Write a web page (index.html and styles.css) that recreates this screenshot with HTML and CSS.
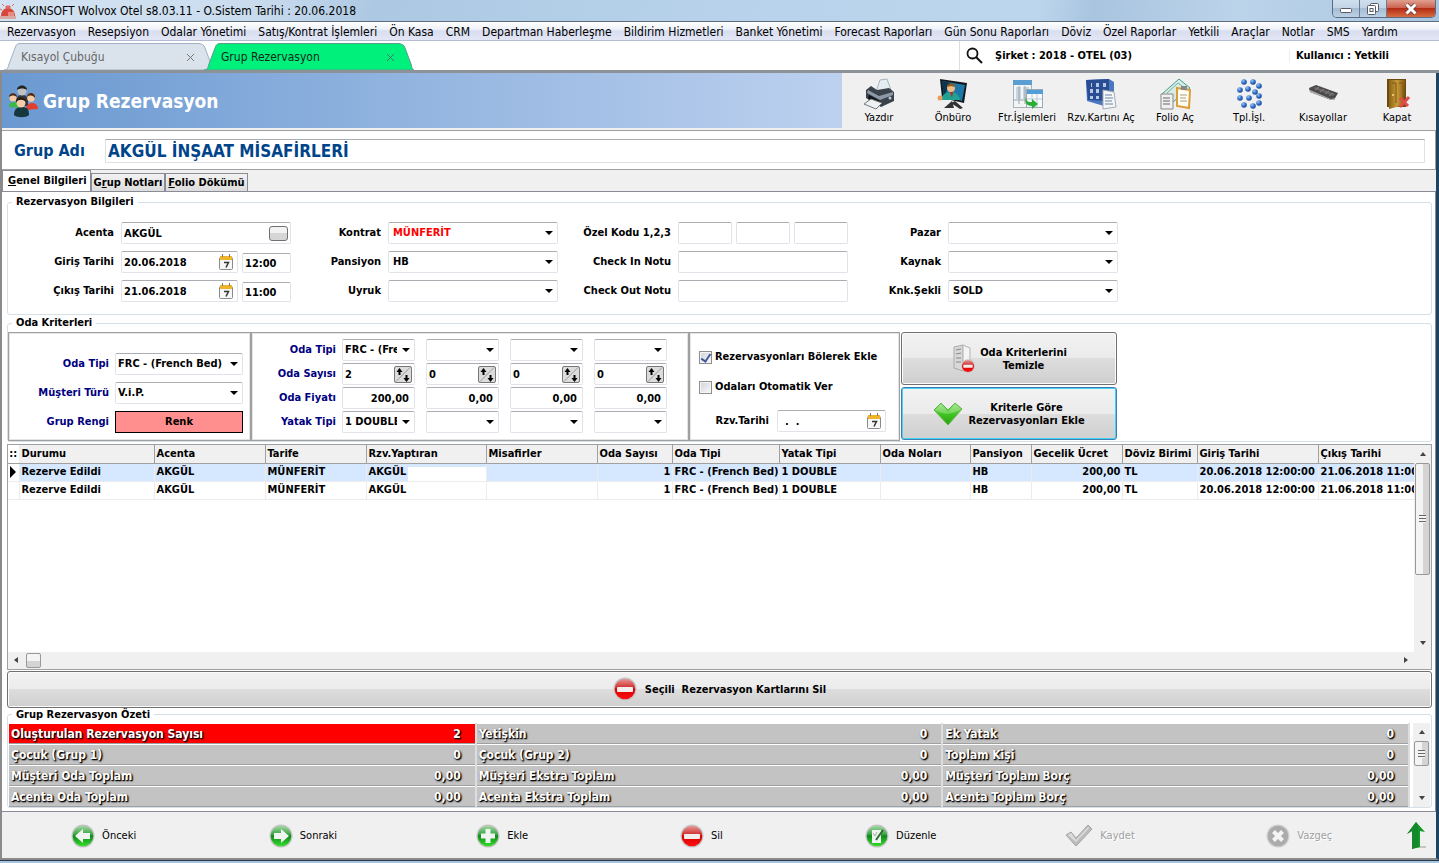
FILE: index.html
```
<!DOCTYPE html>
<html lang="tr">

<head>
    <meta charset="UTF-8">
    <meta name="viewport" content="width=device-width, initial-scale=1.0">
    <title>AKINSOFT Wolvox Otel</title>
    <link rel="stylesheet" href="styles.css">
</head>

<body>
    <!-- shared icons -->
    <svg class="defs" aria-hidden="true">
        <defs>
            <linearGradient id="gGreen" x1="0" y1="0" x2="0" y2="1">
                <stop offset="0" stop-color="#a4d8a4" />
                <stop offset="0.4" stop-color="#3fa84a" />
                <stop offset="0.5" stop-color="#0f8a1c" />
                <stop offset="1" stop-color="#35e02a" />
            </linearGradient>
            <linearGradient id="gRed" x1="0" y1="0" x2="0" y2="1">
                <stop offset="0" stop-color="#e89a9a" />
                <stop offset="0.45" stop-color="#d02a2a" />
                <stop offset="0.5" stop-color="#d80000" />
                <stop offset="1" stop-color="#ff1010" />
            </linearGradient>
            <linearGradient id="gDoor" x1="0" y1="0" x2="1" y2="0">
                <stop offset="0" stop-color="#8a6414" />
                <stop offset="0.5" stop-color="#c79a3a" />
                <stop offset="1" stop-color="#8a5a10" />
            </linearGradient>
            <linearGradient id="gCheck" x1="0" y1="0" x2="0" y2="1">
                <stop offset="0" stop-color="#8fe070" />
                <stop offset="0.5" stop-color="#3fc422" />
                <stop offset="1" stop-color="#2aa012" />
            </linearGradient>
            <radialGradient id="gDot" cx="0.35" cy="0.3" r="0.7">
                <stop offset="0" stop-color="#9cc4f4" />
                <stop offset="0.6" stop-color="#2f6cc8" />
                <stop offset="1" stop-color="#1c4a98" />
            </radialGradient>
            <symbol id="minus" viewBox="0 0 24 24">
                <circle cx="12" cy="12" r="11.5" fill="#c4c4c4" />
                <circle cx="12" cy="12" r="10.3" fill="url(#gRed)" />
                <rect x="4" y="10" width="16" height="5" rx="1" fill="#f2eeee" />
            </symbol>
            <symbol id="calendar" viewBox="0 0 14 16">
                <rect x="0.5" y="3.5" width="13" height="12" rx="1" fill="#f6f6f6" stroke="#8a8a8a" />
                <rect x="1" y="2" width="12" height="4" fill="#f0b428" />
                <path d="M3.5 0v3M10.500 0v3" stroke="#777" />
                <path d="M5 8.500h4.500L7 13.500" fill="none" stroke="#333" stroke-width="1.5" />
            </symbol>
            <symbol id="updown" viewBox="0 0 18 17">
                <rect x="0.5" y="0.5" width="17" height="16" rx="1.500" fill="#dcdcdc" stroke="#777" />
                <path d="M2 15.500L16 1.500" stroke="#999" />
                <path d="M5.500 9V5M12.500 9v4" stroke="#000" stroke-width="2" />
                <path d="M2.500 6L5.500 2l3 4zM9.500 12l3 4 3-4z" />
            </symbol>
        </defs>
    </svg>

    <header class="titlebar">
        <svg class="app-icon" width="16" height="16" viewBox="0 0 16 16">
            <path d="M1 13c0-5 3-8 7-8s7 3 7 8z" fill="#d8463c" />
            <path d="M6 3h4v2H6zM2 1l2 2M14 1l-2 2M0 6l2 1" fill="#e06a60" stroke="#e06a60" />
            <rect y="13" width="16" height="3" fill="#d8a8a4" />
            <path d="M9 9v4M11 9v4M13 9v4" stroke="#f4d0cc" />
        </svg>
        <span class="title">AKINSOFT Wolvox Otel s8.03.11 - O.Sistem Tarihi : 20.06.2018</span>
        <div class="window-buttons">
            <button class="win" aria-label="Simge durumuna küçült">
                <svg width="12" height="10" viewBox="0 0 12 10"><rect x="0.5" y="4.500" width="11" height="4" rx="1" fill="#fff" stroke="#555a66" /></svg>
            </button>
            <button class="win" aria-label="Önceki boyut">
                <svg width="12" height="12" viewBox="0 0 12 12" fill="#fff" stroke="#555a66"><rect x="3.500" y="0.500" width="8" height="8" rx="1" /><rect x="0.500" y="2.500" width="8" height="9" rx="1" /><rect x="3" y="5.500" width="3" height="3" /></svg>
            </button>
            <button class="win close" aria-label="Kapat">
                <svg width="14" height="12" viewBox="0 0 14 12"><path d="M2.500 1.500l9 9M11.500 1.500l-9 9" stroke="#6a3a3a" stroke-width="4.500" /><path d="M2.500 1.500l9 9M11.500 1.500l-9 9" stroke="#fff" stroke-width="3" /></svg>
            </button>
        </div>
    </header>

    <nav class="menu">
        <a href="#">Rezervasyon</a>
        <a href="#">Resepsiyon</a>
        <a href="#">Odalar Yönetimi</a>
        <a href="#">Satış/Kontrat İşlemleri</a>
        <a href="#">Ön Kasa</a>
        <a href="#">CRM</a>
        <a href="#">Departman Haberleşme</a>
        <a href="#">Bildirim Hizmetleri</a>
        <a href="#">Banket Yönetimi</a>
        <a href="#">Forecast Raporları</a>
        <a href="#">Gün Sonu Raporları</a>
        <a href="#">Döviz</a>
        <a href="#">Özel Raporlar</a>
        <a href="#">Yetkili</a>
        <a href="#">Araçlar</a>
        <a href="#">Notlar</a>
        <a href="#">SMS</a>
        <a href="#">Yardım</a>
    </nav>

    <div class="doc-tabs">
        <div class="doc-tab">
            <svg class="tab-shape" viewBox="0 0 210 27" preserveAspectRatio="none"><path d="M0 27c4 0 4-3 5-6l6-16c1-3 2-4.500 5-4.500h178c4 0 6 1.500 7 4.500l6 16c1 3 1 6 3 6z" fill="#dae3ec" stroke="#9fb0c2" /></svg>
            <span>Kısayol Çubuğu</span>
            <button class="tab-close" aria-label="Sekmeyi kapat"><svg width="7" height="7" viewBox="0 0 7 7"><path d="M0 0l7 7M7 0L0 7" stroke="#777" /></svg></button>
        </div>
        <div class="doc-tab active">
            <svg class="tab-shape" viewBox="0 0 210 27" preserveAspectRatio="none"><path d="M0 27c4 0 4-3 5-6l6-16c1-3 2-4.500 5-4.500h178c4 0 6 1.500 7 4.500l6 16c1 3 1 6 3 6z" fill="#00f07c" stroke="#5d9a8e" /></svg>
            <span>Grup Rezervasyon</span>
            <button class="tab-close" aria-label="Sekmeyi kapat"><svg width="7" height="7" viewBox="0 0 7 7"><path d="M0 0l7 7M7 0L0 7" stroke="#3f7a60" /></svg></button>
        </div>
        <div class="session">
            <svg width="17" height="17" viewBox="0 0 17 17" fill="none" stroke="#111"><circle cx="6.500" cy="6.500" r="5" stroke-width="1.800" /><path d="M10 10l6 6" stroke-width="2" /></svg>
            <b class="company">Şirket : 2018 - OTEL (03)</b>
            <b class="user">Kullanıcı : Yetkili</b>
        </div>
    </div>

    <main class="window">
        <div class="banner">
            <svg width="30" height="34" viewBox="0 0 30 34">
                <path d="M7 17c0-5 3-6 6-6s6 1 6 6v5H7z" fill="#33363c" />
                <circle cx="13" cy="7" r="4.500" fill="#c0c0c0" /><path d="M8 6c0-6 10-6 10 0-3-2-7-2-10 0z" fill="#222" />
                <path d="M0 23c0-4 2-5 5-5s6 2 6 6z" fill="#3eb84a" /><circle cx="4" cy="14" r="3.500" fill="#f4c8a0" /><path d="M0 13c0-5 8-5 8 0-3-2-5-2-8 0z" fill="#4a2a14" />
                <path d="M17 26c0-5 3-7 6-7s6 2 6 6z" fill="#e0402c" /><circle cx="22" cy="14" r="3.800" fill="#f6cba4" /><path d="M18 13c0-6 9-5 8 1-3-3-5-3-8-1z" fill="#5a2a14" />
                <path d="M5 31c0-6 3-8 8-8s7 2 7 8c-3 3-12 3-15 0z" fill="#14383e" /><circle cx="12" cy="19" r="4.500" fill="#f6cda8" /><path d="M7 18c0-6 10-6 10 0-3-3-7-3-10 0z" fill="#2a1a10" />
            </svg>
            <h1>Grup Rezervasyon</h1>
            <div class="toolbar">
                <button>
                    <svg width="32" height="32" viewBox="0 0 32 32"><path d="M13 14L17 2l7-1 4 11z" fill="#e4edf2" stroke="#a8b4bc" /><path d="M3 12l5-4 6 4 12-2 5 4v9l-13 6-15-9z" fill="#3a424c" /><path d="M5 12l11 6 14-4v3l-13 5L4 15z" fill="#8d99a6" /><path d="M6 17l11 6-1 4-11-6z" fill="#0e1218" /><path d="M1 26l7-5 11 4-6 6z" fill="#eef2f4" stroke="#777" /><circle cx="27" cy="20" r="1.500" fill="#bcd" /></svg>
                    Yazdır
                </button>
                <button>
                    <svg width="32" height="32" viewBox="0 0 32 32"><path d="M3 1l27 4-3 20L5 20z" fill="#15181c" /><path d="M5 3l23 4-3 16L7 18z" fill="#1d78a8" /><path d="M5 3l9 2-7 13z" fill="#0b3550" /><circle cx="14" cy="10" r="4" fill="#f0bc88" /><path d="M10 9c0-5 8-5 8 0l-4-1z" fill="#8a5a22" /><path d="M3 22c3-6 6-8 11-8s8 3 9 8z" fill="#1fa392" /><path d="M13 14h3l-1 6z" fill="#c22" /><circle cx="3" cy="20" r="2.500" fill="#ee9a5a" /><path d="M7 30l8-7 2 7M18 23l8 7-3 1-9-6" fill="#333" /></svg>
                    Önbüro
                </button>
                <button>
                    <svg width="32" height="32" viewBox="0 0 32 32"><rect x="2.500" y="2.500" width="18" height="27" fill="#f2f4f6" stroke="#aab2ba" /><path d="M2 2h19v5H2z" fill="#5d9ed2" /><path d="M5 9h5v12H5zM12 9h6v12h-6z" fill="#c8d4e0" /><path d="M2 22h19M8 8v18M14 8v18" stroke="#9aa4ae" /><rect x="15.500" y="11.500" width="16" height="18" fill="#f6fafc" stroke="#98a8b4" /><path d="M16 12h16v4H16z" fill="#4f9ed8" /><path d="M21 16v13M26 16v13M16 21h15" stroke="#bccad4" /><path d="M15 19c0 5 3 5 6 5v-3l6 5-6 5v-3c-5 0-8-3-6-9z" fill="#2cae36" /></svg>
                    Ftr.İşlemleri
                </button>
                <button>
                    <svg width="32" height="32" viewBox="0 0 32 32"><path d="M1 2l23-1 5 3v20l-10 4L2 23z" fill="#4a78c0" /><path d="M1 2l23-1v22L3 22z" fill="#2a4c92" /><g fill="#b4c8ea"><rect x="6" y="5" width="1" height="4" /><rect x="11" y="5" width="3" height="4" /><rect x="18" y="5" width="3" height="4" /><rect x="5" y="11" width="3" height="4" /><rect x="11" y="11" width="3" height="4" /><rect x="5" y="18" width="3" height="3" /><rect x="11" y="18" width="3" height="3" /></g><path d="M18 12l11 2 2 15-13 2z" fill="#f4f6f8" stroke="#a4acb4" /><path d="M20 17h7M20 20h8M20 23h7M20 26h8" stroke="#6c84a4" /></svg>
                    Rzv.Kartını Aç
                </button>
                <button>
                    <svg width="32" height="32" viewBox="0 0 32 32"><path d="M3 16L20 1l11 9-17 14z" fill="#d6ece4" stroke="#4a9a88" /><path d="M8 15L19 5l8 6" fill="none" stroke="#70b4a4" /><path d="M2 16h12v15H2z" fill="#f0f0f0" stroke="#888" /><path d="M4 20h7M4 23h7M4 26h7" stroke="#666" /><path d="M18 10l13 2-1 18-12-2z" fill="#fffdf4" stroke="#dd9c38" stroke-width="2" /><path d="M21 17h7M21 20h6M21 23h7" stroke="#a89c84" /><rect x="22" y="8" width="6" height="4" fill="#888" /></svg>
                    Folio Aç
                </button>
                <button>
                    <svg width="32" height="32" viewBox="0 0 32 32" fill="url(#gDot)"><circle cx="11" cy="4" r="2.800" /><circle cx="20" cy="4" r="2.800" /><circle cx="7" cy="12" r="2.800" /><circle cx="15" cy="11" r="2.800" /><circle cx="26" cy="8" r="2.800" /><circle cx="7" cy="20" r="2.800" /><circle cx="16" cy="20" r="2.800" /><circle cx="22" cy="14" r="2.800" /><circle cx="11" cy="27" r="2.800" /><circle cx="20" cy="28" r="2.800" /><circle cx="26" cy="25" r="2.800" /><circle cx="26" cy="18" r="2.800" /></svg>
                    Tpl.İşl.
                </button>
                <button>
                    <svg width="32" height="32" viewBox="0 0 32 32"><path d="M2 10l7-3 22 8-4 7h-3L3 14z" fill="#4a4a4c" /><path d="M6 10l3-1 19 7-2 2z" fill="#6c6664" /><path d="M3 14l21 8h3l1-2-4 1L3 12z" fill="#aeaeae" /><path d="M8 12l4-3M13 14l4-3M18 16l4-3M22 18l4-3" stroke="#8a8480" /></svg>
                    Kısayollar
                </button>
                <button>
                    <svg width="32" height="32" viewBox="0 0 32 32"><path d="M6 1h19v28H6z" fill="#6a4a10" /><path d="M8 2h16l-1 25-15 4z" fill="url(#gDoor)" /><path d="M11 5h4v20M18 5h4v18" fill="none" stroke="#7a5818" /><circle cx="12" cy="17" r="1" fill="#f8e070" /><path d="M19 20l8 8M28 19l-9 10" stroke="#e04a4a" stroke-width="3" /></svg>
                    Kapat
                </button>
            </div>
        </div>

        <div class="group-name">
            <label for="grupAdi">Grup Adı</label>
            <input id="grupAdi" type="text" value="AKGÜL İNŞAAT MİSAFİRLERİ">
        </div>

        <div class="page-tabs">
            <button class="selected"><u>G</u>enel Bilgileri</button>
            <button>G<u>r</u>up Notları</button>
            <button><u>F</u>olio Dökümü</button>
        </div>

        <div class="page">
            <fieldset class="info">
                <legend>Rezervasyon Bilgileri</legend>
                <div class="info-grid">
                    <label for="acenta">Acenta</label>
                    <div class="field"><input id="acenta" type="text" value="AKGÜL"><button class="pick" aria-label="Acenta seç"></button></div>
                    <label for="kontrat">Kontrat</label>
                    <div class="field combo"><select id="kontrat" class="red"><option>MÜNFERİT</option></select></div>
                    <label for="kod1">Özel Kodu 1,2,3</label>
                    <div class="triple">
                        <div class="field"><input id="kod1" type="text"></div>
                        <div class="field"><input type="text" aria-label="Özel Kodu 2"></div>
                        <div class="field"><input type="text" aria-label="Özel Kodu 3"></div>
                    </div>
                    <label for="pazar">Pazar</label>
                    <div class="field combo"><select id="pazar"><option></option></select></div>

                    <label for="giris">Giriş Tarihi</label>
                    <div class="date-time">
                        <div class="field"><input id="giris" type="text" value="20.06.2018"><button class="cal" aria-label="Takvim"><svg width="14" height="16"><use href="#calendar" /></svg></button></div>
                        <div class="field time"><input type="text" value="12:00" aria-label="Giriş Saati"></div>
                    </div>
                    <label for="pansiyon">Pansiyon</label>
                    <div class="field combo"><select id="pansiyon"><option>HB</option></select></div>
                    <label for="checkin">Check In Notu</label>
                    <div class="field"><input id="checkin" type="text"></div>
                    <label for="kaynak">Kaynak</label>
                    <div class="field combo"><select id="kaynak"><option></option></select></div>

                    <label for="cikis">Çıkış Tarihi</label>
                    <div class="date-time">
                        <div class="field"><input id="cikis" type="text" value="21.06.2018"><button class="cal" aria-label="Takvim"><svg width="14" height="16"><use href="#calendar" /></svg></button></div>
                        <div class="field time"><input type="text" value="11:00" aria-label="Çıkış Saati"></div>
                    </div>
                    <label for="uyruk">Uyruk</label>
                    <div class="field combo"><select id="uyruk"><option></option></select></div>
                    <label for="checkout">Check Out Notu</label>
                    <div class="field"><input id="checkout" type="text"></div>
                    <label for="konaklama">Knk.Şekli</label>
                    <div class="field combo"><select id="konaklama"><option>SOLD</option></select></div>
                </div>
            </fieldset>

            <fieldset class="criteria">
                <legend>Oda Kriterleri</legend>
                <div class="criteria-row">
                    <div class="panel general">
                        <label for="odaTipi">Oda Tipi</label>
                        <div class="field combo"><select id="odaTipi"><option>FRC - (French Bed)</option></select></div>
                        <label for="musteri">Müşteri Türü</label>
                        <div class="field combo"><select id="musteri"><option>V.i.P.</option></select></div>
                        <label for="renk">Grup Rengi</label>
                        <button id="renk" class="color">Renk</button>
                    </div>

                    <div class="panel rooms">
                        <label for="tip1">Oda Tipi</label>
                        <div class="field combo"><select id="tip1"><option>FRC - (French Bed)</option></select></div>
                        <div class="field combo"><select aria-label="Oda Tipi 2"><option></option></select></div>
                        <div class="field combo"><select aria-label="Oda Tipi 3"><option></option></select></div>
                        <div class="field combo"><select aria-label="Oda Tipi 4"><option></option></select></div>

                        <label for="sayi1">Oda Sayısı</label>
                        <div class="field"><input id="sayi1" type="text" value="2"><button class="spin" aria-label="Değiştir"><svg width="18" height="17"><use href="#updown" /></svg></button></div>
                        <div class="field"><input type="text" value="0" aria-label="Oda Sayısı 2"><button class="spin" aria-label="Değiştir"><svg width="18" height="17"><use href="#updown" /></svg></button></div>
                        <div class="field"><input type="text" value="0" aria-label="Oda Sayısı 3"><button class="spin" aria-label="Değiştir"><svg width="18" height="17"><use href="#updown" /></svg></button></div>
                        <div class="field"><input type="text" value="0" aria-label="Oda Sayısı 4"><button class="spin" aria-label="Değiştir"><svg width="18" height="17"><use href="#updown" /></svg></button></div>

                        <label for="fiyat1">Oda Fiyatı</label>
                        <div class="field money"><input id="fiyat1" type="text" value="200,00"></div>
                        <div class="field money"><input type="text" value="0,00" aria-label="Oda Fiyatı 2"></div>
                        <div class="field money"><input type="text" value="0,00" aria-label="Oda Fiyatı 3"></div>
                        <div class="field money"><input type="text" value="0,00" aria-label="Oda Fiyatı 4"></div>

                        <label for="yatak1">Yatak Tipi</label>
                        <div class="field combo"><select id="yatak1"><option>1 DOUBLE</option></select></div>
                        <div class="field combo"><select aria-label="Yatak Tipi 2"><option></option></select></div>
                        <div class="field combo"><select aria-label="Yatak Tipi 3"><option></option></select></div>
                        <div class="field combo"><select aria-label="Yatak Tipi 4"><option></option></select></div>
                    </div>

                    <div class="panel options">
                        <label class="check"><input type="checkbox" checked> Rezervasyonları Bölerek Ekle</label>
                        <label class="check"><input type="checkbox"> Odaları Otomatik Ver</label>
                        <div class="rzv-date">
                            <label for="rzvTarihi">Rzv.Tarihi</label>
                            <div class="field"><input id="rzvTarihi" type="text" value=".  ."><button class="cal" aria-label="Takvim"><svg width="14" height="16"><use href="#calendar" /></svg></button></div>
                        </div>
                    </div>

                    <div class="actions">
                        <button class="big">
                            <svg width="24" height="30" viewBox="0 0 24 30"><path d="M3 3l9-2v26l-9-3z" fill="#d8d8d8" stroke="#aaa" /><path d="M12 1l7 3v22l-7 1z" fill="#f4f4f4" stroke="#b4b4b4" /><path d="M5 6l5-1M5 10l5-1M5 14h5M5 18h5" stroke="#888" /><use href="#minus" x="10" y="15" width="14" height="14" /></svg>
                            <span>Oda Kriterlerini<br>Temizle</span>
                        </button>
                        <button class="big focused">
                            <svg width="30" height="26" viewBox="0 0 30 26"><path d="M1 9l7-7 7 7 7-7 7 6-14 16z" fill="url(#gCheck)" stroke="#62b84a" /><path d="M2 9l6-6 7 8 7-8 6 5c-8 6-18 6-26 1z" fill="#fff" opacity="0.25" /></svg>
                            <span>Kriterle Göre<br>Rezervasyonları Ekle</span>
                        </button>
                    </div>
                </div>
            </fieldset>

            <div class="grid">
                <div class="grid-view">
                    <table>
                        <colgroup>
                            <col class="w11"><col class="w135"><col class="w111"><col class="w101"><col class="w120"><col class="w111"><col class="w75"><col class="w107"><col class="w101"><col class="w90"><col class="w61"><col class="w91"><col class="w75"><col class="w121"><col class="w121">
                        </colgroup>
                        <thead>
                            <tr>
                                <th class="mark">::</th>
                                <th>Durumu</th>
                                <th>Acenta</th>
                                <th>Tarife</th>
                                <th>Rzv.Yaptıran</th>
                                <th>Misafirler</th>
                                <th>Oda Sayısı</th>
                                <th>Oda Tipi</th>
                                <th>Yatak Tipi</th>
                                <th>Oda Noları</th>
                                <th>Pansiyon</th>
                                <th>Gecelik Ücret</th>
                                <th>Döviz Birimi</th>
                                <th>Giriş Tarihi</th>
                                <th>Çıkış Tarihi</th>
                            </tr>
                        </thead>
                        <tbody>
                            <tr class="current">
                                <td class="mark"><svg width="6" height="12" viewBox="0 0 6 12"><path d="M0 0l6 6-6 6z" /></svg></td>
                                <td>Rezerve Edildi</td>
                                <td>AKGÜL</td>
                                <td>MÜNFERİT</td>
                                <td class="person">AKGÜL<span class="blank"></span></td>
                                <td></td>
                                <td class="num">1</td>
                                <td>FRC - (French Bed)</td>
                                <td>1 DOUBLE</td>
                                <td></td>
                                <td>HB</td>
                                <td class="num">200,00</td>
                                <td>TL</td>
                                <td>20.06.2018 12:00:00</td>
                                <td>21.06.2018 11:00</td>
                            </tr>
                            <tr>
                                <td class="mark"></td>
                                <td>Rezerve Edildi</td>
                                <td>AKGÜL</td>
                                <td>MÜNFERİT</td>
                                <td>AKGÜL</td>
                                <td></td>
                                <td class="num">1</td>
                                <td>FRC - (French Bed)</td>
                                <td>1 DOUBLE</td>
                                <td></td>
                                <td>HB</td>
                                <td class="num">200,00</td>
                                <td>TL</td>
                                <td>20.06.2018 12:00:00</td>
                                <td>21.06.2018 11:00</td>
                            </tr>
                        </tbody>
                    </table>
                </div>
                <div class="vscroll">
                    <i class="up"></i>
                    <div class="thumb"></div>
                    <i class="down"></i>
                </div>
                <div class="hscroll">
                    <i class="left"></i>
                    <div class="thumb"></div>
                    <i class="right"></i>
                </div>
                <div class="corner"></div>
            </div>

            <button class="big delete">
                <svg width="24" height="24"><use href="#minus" /></svg>
                <span>Seçili &nbsp;Rezervasyon Kartlarını Sil</span>
            </button>

            <fieldset class="summary">
                <legend>Grup Rezervasyon Özeti</legend>
                <div class="summary-row">
                    <table>
                        <tr>
                            <th class="hot">Oluşturulan Rezervasyon Sayısı</th><td class="hot">2</td>
                            <th>Yetişkin</th><td>0</td>
                            <th>Ek Yatak</th><td>0</td>
                        </tr>
                        <tr>
                            <th>Çocuk (Grup 1)</th><td>0</td>
                            <th>Çocuk (Grup 2)</th><td>0</td>
                            <th>Toplam Kişi</th><td>0</td>
                        </tr>
                        <tr>
                            <th>Müşteri Oda Toplam</th><td>0,00</td>
                            <th>Müşteri Ekstra Toplam</th><td>0,00</td>
                            <th>Müşteri Toplam Borç</th><td>0,00</td>
                        </tr>
                        <tr>
                            <th>Acenta Oda Toplam</th><td>0,00</td>
                            <th>Acenta Ekstra Toplam</th><td>0,00</td>
                            <th>Acenta Toplam Borç</th><td>0,00</td>
                        </tr>
                    </table>
                    <div class="vscroll">
                        <i class="up"></i>
                        <div class="thumb"></div>
                        <i class="down"></i>
                    </div>
                </div>
            </fieldset>
        </div>

        <footer>
            <button>
                <svg width="24" height="24" viewBox="0 0 24 24"><circle cx="12" cy="12" r="11.500" fill="#c4c4c4" /><circle cx="12" cy="12" r="10.300" fill="url(#gGreen)" /><path d="M4 12l8-7v4h7v6h-7v4z" fill="#f0f4f0" /></svg>
                Önceki
            </button>
            <button>
                <svg width="24" height="24" viewBox="0 0 24 24"><circle cx="12" cy="12" r="11.500" fill="#c4c4c4" /><circle cx="12" cy="12" r="10.300" fill="url(#gGreen)" /><path d="M20 12l-8-7v4H5v6h7v4z" fill="#f0f4f0" /></svg>
                Sonraki
            </button>
            <button>
                <svg width="24" height="24" viewBox="0 0 24 24"><circle cx="12" cy="12" r="11.500" fill="#c4c4c4" /><circle cx="12" cy="12" r="10.300" fill="url(#gGreen)" /><path d="M9.500 5h5v4.500H19v5h-4.500V19h-5v-4.500H5v-5h4.500z" fill="#f0f4f0" /></svg>
                Ekle
            </button>
            <button>
                <svg width="24" height="24"><use href="#minus" /></svg>
                Sil
            </button>
            <button>
                <svg width="24" height="24" viewBox="0 0 24 24"><circle cx="12" cy="12" r="11.500" fill="#c4c4c4" /><circle cx="12" cy="12" r="10.300" fill="url(#gGreen)" /><path d="M7 6h9v13H7z" fill="#f0f4f0" /><path d="M18 6l-7 10" stroke="#2c6a34" stroke-width="2" /><path d="M8 9l2 3 2-4" fill="none" stroke="#9ab49c" /></svg>
                Düzenle
            </button>
            <button disabled>
                <svg width="28" height="24" viewBox="0 0 28 24"><path d="M1 11l5-3 5 6L23 1l4 4-16 17z" fill="#bdbdbd" stroke="#a4a4a4" /><path d="M3 11l3-2 5 7L23 3l1 1-13 14z" fill="#dcdcdc" /></svg>
                Kaydet
            </button>
            <button disabled>
                <svg width="24" height="24" viewBox="0 0 24 24"><circle cx="12" cy="12" r="11.500" fill="#d0d0d0" /><circle cx="12" cy="12" r="10.300" fill="#ababab" /><path d="M7.500 7.500l9 9M16.500 7.500l-9 9" stroke="#f4f4f4" stroke-width="4" /></svg>
                Vazgeç
            </button>
            <button class="top" aria-label="Yukarı">
                <svg width="20" height="28" viewBox="0 0 20 28"><path d="M7 25h12" stroke="#c0c8c0" stroke-width="2" /><path d="M9 0l9 10-5-1v16l-8 2V9l-5 3z" fill="#0f9a28" /><path d="M9 0l2 3v22l-6 2V9l-5 3z" fill="#14882a" /></svg>
            </button>
        </footer>
    </main>
    <div class="taskbar"></div>
</body>

</html>
```
FILE: styles.css
```
* {
    box-sizing: border-box;
}

body {
    display: flex;
    flex-direction: column;
    min-height: 100vh;
    margin: 0;
    background: #fff;
    font-family: "DejaVu Sans Condensed", "DejaVu Sans", Tahoma, sans-serif;
    font-size: 11px;
    line-height: 14px;
    color: #000;
}

button,
input,
select {
    font: inherit;
    color: inherit;
}

button {
    padding: 0;
    border: 0;
    background: none;
}

svg {
    flex: none;
}

.defs {
    position: absolute;
    width: 0;
    height: 0;
}

/* title bar */
.titlebar {
    display: flex;
    align-items: center;
    height: 22px;
    padding-right: 3px;
    border-bottom: 1px solid #5d6b7c;
    background: linear-gradient(100deg, #d4e3f2 0%, #c9dcee 18%, #adc8e2 26%, #b7d2ea 50%, #bcd6ed 72%, #a9c4df 76%, #bcd4ea 86%, #a9c6e0 100%);
    font-size: 12px;
}

.app-icon {
    margin-right: 5px;
}

.title {
    flex: 1;
}

.window-buttons {
    display: flex;
    align-self: flex-start;
    height: 18px;
    border: 1px solid #5a6a80;
    border-top: 0;
    border-radius: 0 0 5px 5px;
    overflow: hidden;
}

.win {
    display: flex;
    align-items: center;
    justify-content: center;
    width: 27px;
    border-right: 1px solid #6a7a90;
    background: linear-gradient(#cfdfee 0%, #c2d4e6 45%, #a4bcd4 50%, #bcd0e4 100%);
}

.win.close {
    width: 48px;
    border: 0;
    background: linear-gradient(#e0a090 0%, #cc6450 45%, #b42c14 50%, #d86c40 100%);
}

/* menu */
.menu {
    display: flex;
    align-items: center;
    gap: 12px;
    height: 19px;
    padding: 1px 7px 0;
    border-bottom: 1px solid #b4bccf;
    background: linear-gradient(#fff 0%, #eef1f8 40%, #d9def0 50%, #e2e6f5 100%);
    font-size: 12px;
    white-space: nowrap;
}

.menu a {
    color: #000;
    text-decoration: none;
}

/* document tabs */
.doc-tabs {
    display: flex;
    align-items: flex-end;
    height: 32px;
    padding-left: 4px;
    border-bottom: 3px solid #8c9297;
    background: #fff;
}

.doc-tab {
    position: relative;
    display: flex;
    align-items: center;
    justify-content: space-between;
    width: 200px;
    height: 27px;
    padding: 0 10px 0 17px;
    font-size: 12px;
    color: #666;
}

.doc-tab.active {
    color: #102818;
}

.tab-shape {
    position: absolute;
    left: 0;
    top: 0;
    width: 210px;
    height: 27px;
}

.doc-tab span,
.tab-close {
    position: relative;
}

.session {
    display: flex;
    align-items: center;
    align-self: stretch;
    width: 480px;
    margin-left: auto;
    padding-left: 6px;
    border-left: 1px solid #ddd;
}

.company {
    flex: 1;
    padding-left: 12px;
}

.user {
    width: 150px;
    padding-left: 6px;
    border-left: 1px solid #eee;
}

/* main window */
.window {
    flex: 1;
    display: flex;
    flex-direction: column;
    border: solid #8a8a8a;
    border-width: 0 3px 2px 2px;
    border-right-color: #1f4462;
    background: #f0f0f0;
}

.banner {
    display: flex;
    align-items: center;
    height: 55px;
    margin-right: 2px;
    padding-left: 7px;
    background: linear-gradient(90deg, #6a99d1 0, #bdd1ef 840px);
}

.banner h1 {
    flex: 1;
    margin: 0;
    padding-left: 4px;
    font-size: 19px;
    line-height: 24px;
    color: #fff;
}

.toolbar {
    display: flex;
    height: 55px;
    background: #f0f0f0;
}

.toolbar button {
    display: flex;
    flex-direction: column;
    align-items: center;
    gap: 1px;
    width: 74px;
    padding-top: 5px;
    white-space: nowrap;
}

.group-name {
    display: flex;
    align-items: center;
    height: 40px;
    margin-top: 2px;
    padding: 1px 10px 0 12px;
    border: 1px solid #a0a0a0;
    border-left: 0;
    background: #fff;
    font-size: 17px;
    font-weight: bold;
    color: #00458a;
}

.group-name label {
    width: 91px;
    font-size: 16px;
}

.group-name input {
    flex: 1;
    height: 24px;
    padding: 0 2px;
    border: 1px solid #dfe3e8;
    border-top-color: #abadb3;
}

.page-tabs {
    display: flex;
    align-items: flex-end;
    height: 21px;
    font-weight: bold;
}

.page-tabs button {
    height: 18px;
    padding: 0 2px;
    border: 1px solid #898c95;
    border-bottom: 0;
    background: linear-gradient(#f2f2f2, #dcdcdc);
}

.page-tabs .selected {
    height: 21px;
    padding: 0 3px 0 5px;
    background: #fff;
}

.page {
    flex: 1;
    display: flex;
    flex-direction: column;
    padding: 3px 3px 3px 5px;
    border: 1px solid #898c95;
    border-left: 0;
    background: #fff;
    font-weight: bold;
}

fieldset {
    min-width: 0;
    margin: 0;
    padding: 0;
    border: 1px solid #d5dfe8;
    border-radius: 3px;
}

legend {
    margin-left: 4px;
    padding: 0 4px;
}

/* fields */
.field {
    display: flex;
    align-items: center;
    min-width: 0;
    height: 22px;
    padding-right: 2px;
    border: 1px solid #e0e4ea;
    border-top-color: #abadb3;
    border-radius: 2px;
    background: #fff;
}

.field input,
.field select {
    flex: 1;
    min-width: 0;
    width: 100%;
    height: 18px;
    padding: 0 2px;
    border: 0;
    background: none;
    appearance: none;
    outline: 0;
}

.combo::after {
    content: "";
    margin: 0 2px 0 3px;
    border: 4px solid transparent;
    border-top-color: #000;
    border-bottom: 0;
}

.field .red {
    color: #f00;
}

.pick {
    width: 19px;
    height: 15px;
    border: 1px solid #707070;
    border-radius: 3px;
    background: linear-gradient(#f2f2f2 50%, #d6d6d6 50%);
}

.cal,
.spin {
    display: flex;
}

.cal {
    margin-right: 2px;
}

.info {
    margin-bottom: 1px;
}

.info-grid {
    display: grid;
    grid-template-columns: 113px 170px 97px 170px 120px 170px 100px 170px;
    row-gap: 7px;
    align-items: center;
    padding: 13px 0 12px;
    text-align: right;
}

.info-grid > label {
    padding-right: 7px;
}

.info-grid .combo select {
    padding-left: 4px;
}

.triple {
    display: flex;
    gap: 4px;
}

.date-time {
    display: flex;
    align-items: flex-end;
    gap: 4px;
}

.date-time .field {
    flex: 1;
}

.date-time .time {
    flex: none;
    width: 49px;
    height: 20px;
    padding: 0;
}

/* room criteria */
.criteria-row {
    display: flex;
    padding-top: 2px;
}

.panel {
    height: 109px;
    border: 1px solid #a0a0a0;
    outline: 1px solid #e4e4e4;
    outline-offset: -2px;
}

.panel label {
    color: #000080;
}

.general {
    display: grid;
    grid-template-columns: 100px 128px;
    column-gap: 6px;
    row-gap: 7px;
    align-items: center;
    align-content: end;
    width: 243px;
    padding-bottom: 7px;
    text-align: right;
}

.color {
    height: 22px;
    border: 1px solid #000;
    background: #ff8f8f;
}

.rooms {
    display: grid;
    grid-template-columns: 79px repeat(4, 73px);
    column-gap: 11px;
    row-gap: 2px;
    align-items: center;
    align-content: end;
    width: 438px;
    padding-bottom: 7px;
    text-align: right;
}

.rooms label {
    margin-right: -5px;
}

.money input {
    padding-right: 3px;
    text-align: right;
}

.options {
    display: flex;
    flex-direction: column;
    gap: 16px;
    width: 211px;
    padding: 17px 13px 0 9px;
}

.panel.options label {
    color: #000;
}

.check {
    display: flex;
    align-items: center;
    gap: 3px;
    white-space: nowrap;
}

.check input {
    display: flex;
    align-items: center;
    justify-content: center;
    width: 13px;
    height: 13px;
    margin: 0;
    border: 1px solid #8e8f8f;
    background: linear-gradient(135deg, #cfd3d8, #f8f8f8);
    box-shadow: inset 0 0 0 1px #f4f4f4;
    appearance: none;
}

.check input:checked::before {
    content: "";
    width: 4px;
    height: 8px;
    border: solid #41599c;
    border-width: 0 2px 2px 0;
    transform: rotate(35deg);
}

.rzv-date {
    display: flex;
    align-items: center;
    justify-content: flex-end;
    gap: 8px;
}

.rzv-date .field {
    width: 109px;
}

.rzv-date .field input {
    padding-left: 7px;
    white-space: pre;
}

.actions {
    display: flex;
    flex-direction: column;
    gap: 2px;
    width: 217px;
    padding-left: 1px;
}

.big {
    display: flex;
    align-items: center;
    justify-content: center;
    gap: 5px;
    border: 1px solid #707070;
    border-radius: 3px;
    background: linear-gradient(#f2f2f2 0%, #ebebeb 50%, #dddddd 50%, #cfcfcf 100%);
    box-shadow: inset 0 0 0 1px #fbfbfb;
    font-weight: bold;
    line-height: 13px;
}

.actions .big {
    height: 53px;
}

.big.focused {
    border-color: #3c7fb1;
    box-shadow: inset 0 0 0 1px #48d0f4;
}

/* reservation list */
.grid {
    flex: 1;
    display: grid;
    grid-template-columns: minmax(0, 1fr) 17px;
    grid-template-rows: 1fr 17px;
    min-height: 140px;
    margin-top: 2px;
    border: 1px solid #a0a0a0;
}

.grid-view {
    overflow: hidden;
    min-width: 0;
}

table {
    border-collapse: collapse;
}

.grid table {
    width: 1431px;
    table-layout: fixed;
}

.w11 { width: 11px; }
.w61 { width: 61px; }
.w75 { width: 75px; }
.w90 { width: 90px; }
.w91 { width: 91px; }
.w101 { width: 101px; }
.w107 { width: 107px; }
.w111 { width: 111px; }
.w120 { width: 120px; }
.w121 { width: 121px; }
.w135 { width: 135px; }

.grid th,
.grid td {
    height: 18px;
    padding: 0 2px;
    border-right: 1px solid #ececec;
    border-bottom: 1px solid #ececec;
    text-align: left;
    white-space: nowrap;
    overflow: hidden;
}

.grid th {
    border-right-color: #a0a0a0;
    border-bottom-color: #a0a0a0;
    background: #f0f0f0;
}

.grid td.num {
    padding-right: 1px;
    text-align: right;
}

.grid .current td {
    background: #d5e8ff;
}

.grid .mark,
.grid .current .mark {
    padding: 0;
    border-right-color: #ececec;
    background: #fff;
    text-align: center;
}

.mark svg {
    display: block;
    margin: 0 auto;
}

.person {
    position: relative;
}

.blank {
    position: absolute;
    inset: 3px 0 0 41px;
    background: #fff;
}

/* scroll bars */
.vscroll,
.hscroll {
    display: flex;
    align-items: center;
    background: #f0f0f0;
}

.vscroll {
    flex: none;
    flex-direction: column;
    width: 17px;
    padding: 7px 0;
}

.hscroll {
    padding: 0 6px;
}

.thumb {
    border: 1px solid #999;
    border-radius: 2px;
    background: linear-gradient(90deg, #f4f4f4 50%, #d4d4d4 50%);
}

.vscroll .thumb {
    width: 15px;
    height: 112px;
    margin: 7px 0 auto;
}

.vscroll .thumb::before {
    content: "";
    display: block;
    width: 7px;
    height: 8px;
    margin: 51px auto 0;
    background: repeating-linear-gradient(#666 0 1px, #f4f4f4 1px 3px);
}

.hscroll .thumb {
    width: 15px;
    height: 15px;
    margin: 0 auto 0 8px;
    background: linear-gradient(#f4f4f4 50%, #d4d4d4 50%);
}

.up,
.down,
.left,
.right {
    border: 3px solid transparent;
}

.up {
    border-top: 0;
    border-bottom: 4px solid #444;
}

.down {
    border-bottom: 0;
    border-top: 4px solid #444;
}

.left {
    border-left: 0;
    border-right: 4px solid #444;
}

.right {
    border-right: 0;
    border-left: 4px solid #444;
}

.corner {
    background: #f0f0f0;
}

.delete {
    height: 37px;
    margin: 1px 0 0;
    gap: 8px;
}

/* summary */
.summary-row {
    display: flex;
    gap: 3px;
    padding: 1px 1px 0;
}

.summary table {
    flex: 1;
    width: 100%;
    table-layout: fixed;
    font-size: 12px;
}

.summary th,
.summary td {
    height: 21px;
    padding: 0 2px;
    border-top: 1px solid #fff;
    background: #c3c3c3;
    box-shadow: inset 0 -1px #a0a0a0;
    color: #fff;
    text-align: left;
    text-shadow: 1px 1px 2px #000, 1px 1px 1px #000;
    white-space: nowrap;
}

.summary td {
    padding-right: 14px;
    border-right: 2px solid #ddd;
    font-weight: bold;
    text-align: right;
}

.summary .hot {
    background: #f00;
}

.summary .thumb {
    height: 25px;
}

.summary .thumb::before {
    margin-top: 8px;
}

/* footer */
footer {
    display: flex;
    align-items: center;
    height: 46px;
    padding: 1px 0 0 2px;
}

footer button {
    flex: 1;
    display: flex;
    align-items: center;
    justify-content: center;
    gap: 7px;
}

footer button:disabled {
    color: #a0a0a0;
    text-shadow: 1px 1px #fff;
}

footer .top {
    flex: none;
    width: 37px;
}

.taskbar {
    height: 3px;
    border-top: 1px solid #27384c;
    background: #a9c4dd;
}
```
